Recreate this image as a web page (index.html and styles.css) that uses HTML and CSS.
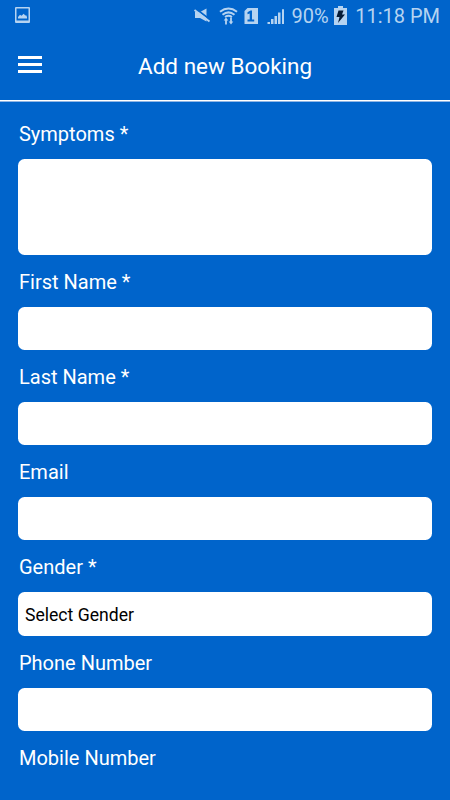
FILE: index.html
```html
<!DOCTYPE html>
<html lang="en">
<head>
<meta charset="utf-8">
<title>Add new Booking</title>
<link rel="stylesheet" href="styles.css">
</head>
<body>
<div class="status">
  <svg class="picture" width="15" height="16" viewBox="0 0 15 16"><path fill="currentColor" fill-rule="evenodd" d="M1 0h13q1 0 1 1v14q0 1-1 1H1q-1 0-1-1V1q0-1 1-1zM1.500 1.500v12h12v-12z"/><path fill="currentColor" d="M3 11.500V10l2-2.300 1.500 1L8.700 6.700l1.500 1.700 1-.2L12 10v1.500z"/></svg>
  <svg class="system" width="94" height="20" viewBox="0 0 94 20">
    <g fill="currentColor">
      <path d="M2 7h5l6.500-3.500v13L7 13H2z"/>
      <path d="M2.500 3.500L17.500 15" stroke="#0064cb" stroke-width="1.800"/>
      <path d="M1.500 5L16.500 16.500" stroke="currentColor" stroke-width="1.800"/>
      <path d="M27 6.700Q35.500 .200 44 6.700M29.500 9.700Q35.500 5 41.500 9.700M32 12Q35.500 9.700 39 12" fill="none" stroke="currentColor" stroke-width="2"/>
      <path d="M33 12.500l2.300 3h-1.400v4h-1.800v-4h-1.400zM38 19.500l-2.300-3h1.400v-4h1.800v4h1.400z"/>
      <path fill-rule="evenodd" d="M54.500 3H65v16H51.500V6zM57.500 5.500l-3 1.800v2l2.200-.7v5.900h-2.200v2h6.700v-2H59v-9z"/>
      <path d="M74.500 17H77v2h-2.500zM78 14h2.500v5H78zM81.500 11H84v8h-2.500zM85 7.500h2.500V19H85zM89 4.300h2V19h-2z"/>
    </g>
  </svg>
  <span class="percent">90%</span>
  <svg class="battery" width="13" height="19" viewBox="0 0 13 19"><path fill="currentColor" d="M4 0h5v2h4v17H0V2h4z"/><path fill="#061c38" d="M4.500 4.500h5L8 8.500h3L4 17l1.500-6H2.500z"/></svg>
  <span class="clock">11:18 PM</span>
</div>
<header class="bar">
  <div class="menu"><i></i><i></i><i></i></div>
  <h1>Add new Booking</h1>
</header>
<form class="form">
  <label>Symptoms *</label><div class="box tall"></div>
  <label>First Name *</label><div class="box"></div>
  <label>Last Name *</label><div class="box"></div>
  <label>Email</label><div class="box"></div>
  <label>Gender *</label><div class="box">Select Gender</div>
  <label>Phone Number</label><div class="box"></div>
  <label>Mobile Number</label>
</form>
</body>
</html>
```
FILE: styles.css
```css
* { box-sizing: border-box; }
body {
  margin: 0;
  height: 800px;
  overflow: hidden;
  background: #0064cb;
  color: #fff;
  font-family: Roboto, sans-serif;
}
.status {
  display: flex;
  align-items: center;
  height: 31px;
  padding: 0 10px 0 15px;
  color: #b5d3f1;
  font-size: 20px;
  white-space: nowrap;
}
.picture { margin-top: -1px; }
.system { margin: -1px 0 0 auto; }
.percent { margin-left: 5px; }
.battery { margin: -1px 0 0 5px; }
.clock { margin-left: 8.5px; }
.bar {
  display: flex;
  align-items: center;
  height: 71px;
  padding: 0 18px;
  border-bottom: 1px solid #8fb5e4;
  box-shadow: inset 0 -1px #fff;
}
.menu {
  display: flex;
  flex-direction: column;
  gap: 4px;
  width: 24px;
  margin-top: -4px;
}
.menu i { height: 3px; background: #fff; }
h1 {
  margin: 0 0 0 96px;
  font-size: 22.5px;
  font-weight: 400;
  white-space: nowrap;
}
.form { padding: 5.5px 18.4px 0; }
.form label {
  display: block;
  height: 51.9px;
  padding-left: .6px;
  font-size: 20px;
  line-height: 54.4px;
}
.form label:first-child { line-height: 53px; }
.box {
  height: 43.3px;
  padding-left: 6.6px;
  border-radius: 6.5px;
  background: #fff;
  color: #000;
  font-size: 17.6px;
  line-height: 46.4px;
}
.box.tall { height: 95.5px; }
```
